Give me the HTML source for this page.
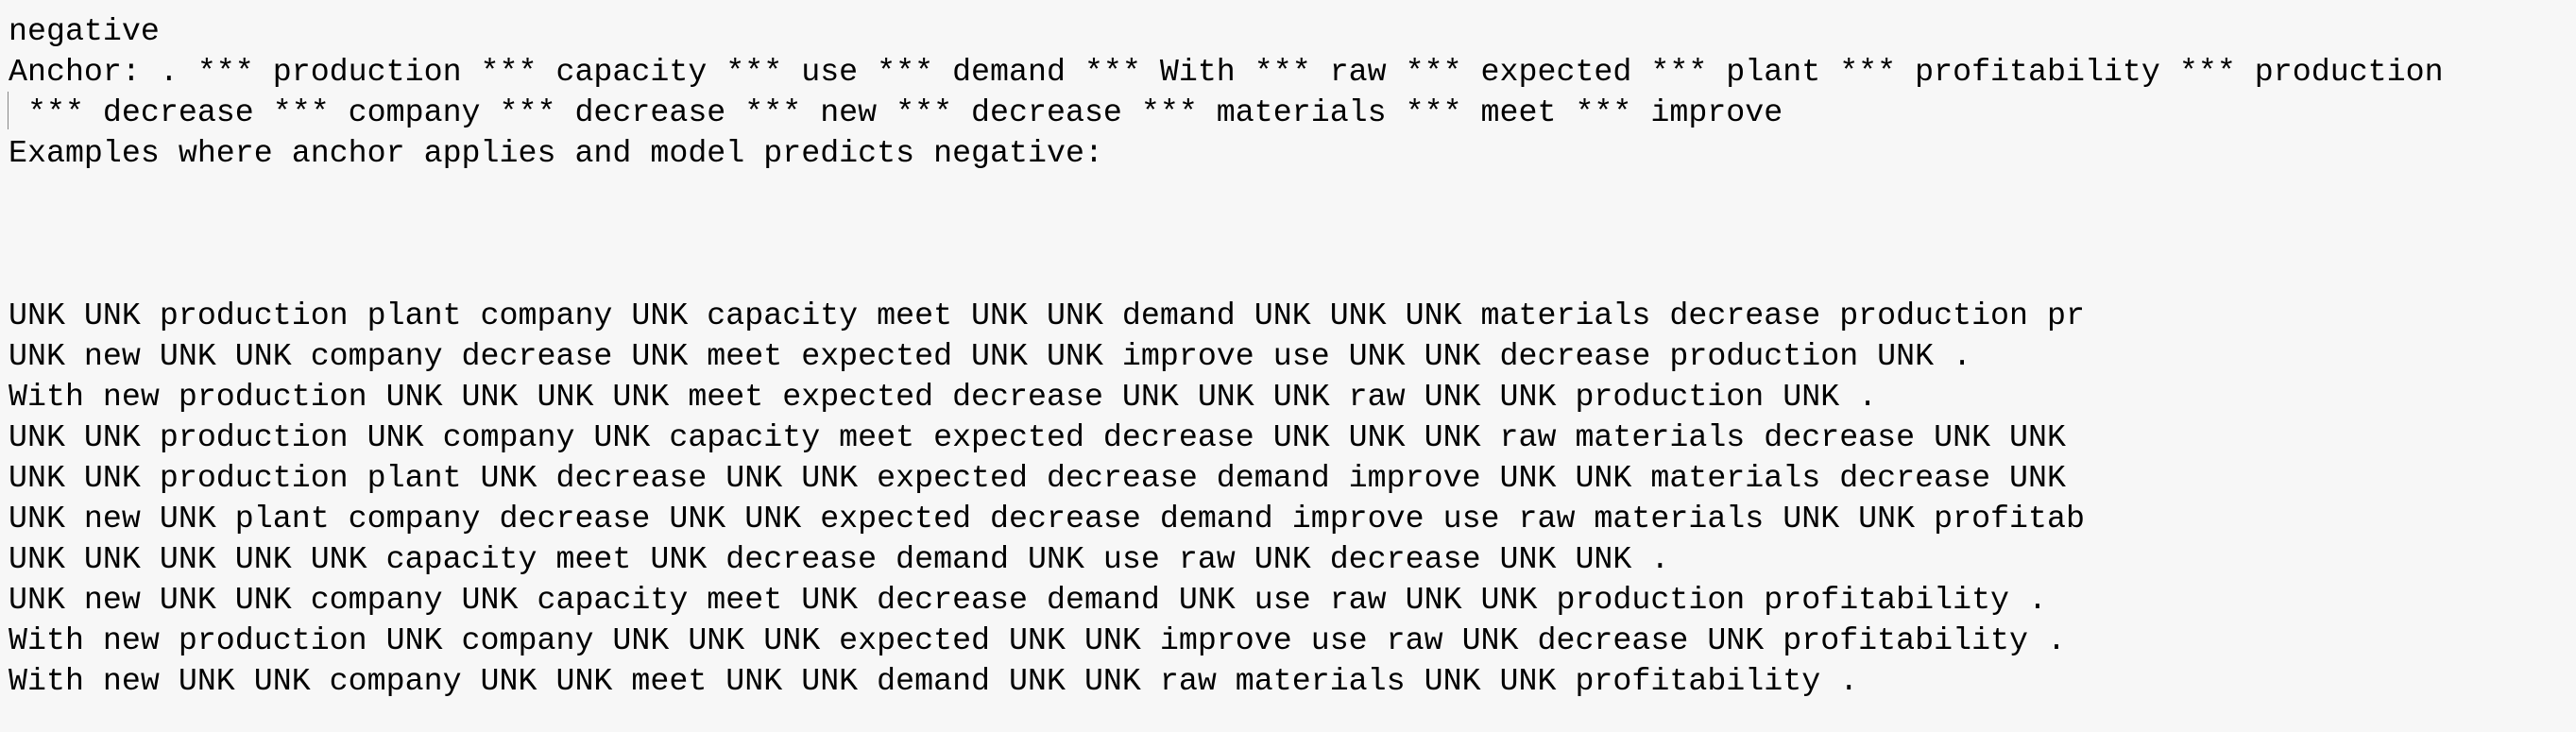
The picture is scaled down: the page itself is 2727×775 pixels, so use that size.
<!DOCTYPE html>
<html><head><meta charset="utf-8"><style>
html,body{margin:0;padding:0;background:#f7f7f7;width:2727px;height:775px;overflow:hidden}
pre{position:absolute;left:9px;top:12px;margin:0;font-family:"Liberation Mono",monospace;font-size:33.3px;line-height:43px;color:#000}
.bar{position:absolute;left:8px;top:97px;width:1px;height:40px;background:#888}
</style></head><body>
<div class="bar"></div>
<pre>negative
Anchor: . *** production *** capacity *** use *** demand *** With *** raw *** expected *** plant *** profitability *** production
 *** decrease *** company *** decrease *** new *** decrease *** materials *** meet *** improve
Examples where anchor applies and model predicts negative:



UNK UNK production plant company UNK capacity meet UNK UNK demand UNK UNK UNK materials decrease production pr
UNK new UNK UNK company decrease UNK meet expected UNK UNK improve use UNK UNK decrease production UNK .
With new production UNK UNK UNK UNK meet expected decrease UNK UNK UNK raw UNK UNK production UNK .
UNK UNK production UNK company UNK capacity meet expected decrease UNK UNK UNK raw materials decrease UNK UNK
UNK UNK production plant UNK decrease UNK UNK expected decrease demand improve UNK UNK materials decrease UNK
UNK new UNK plant company decrease UNK UNK expected decrease demand improve use raw materials UNK UNK profitab
UNK UNK UNK UNK UNK capacity meet UNK decrease demand UNK use raw UNK decrease UNK UNK .
UNK new UNK UNK company UNK capacity meet UNK decrease demand UNK use raw UNK UNK production profitability .
With new production UNK company UNK UNK UNK expected UNK UNK improve use raw UNK decrease UNK profitability .
With new UNK UNK company UNK UNK meet UNK UNK demand UNK UNK raw materials UNK UNK profitability .</pre>
</body></html>
